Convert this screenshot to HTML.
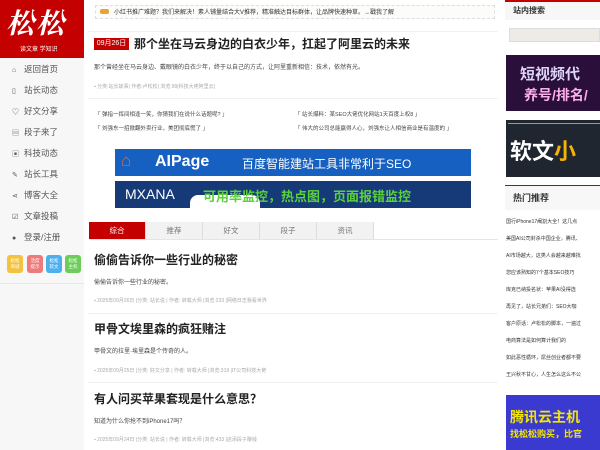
<!DOCTYPE html>
<html><head><meta charset="utf-8"><style>
*{margin:0;padding:0;box-sizing:border-box}
body{width:600px;height:450px;overflow:hidden;background:#fff;font-family:"Liberation Sans","Noto Sans CJK SC",sans-serif;color:#333;position:relative}
.a{position:absolute;white-space:nowrap}
#side{position:absolute;left:0;top:0;width:84px;height:450px;background:#f7f7f7}
#logo{position:absolute;left:0;top:0;width:84px;height:58px;background:#c40000;color:#fff}
.nav{position:absolute;left:12px;font-size:8.5px;color:#555}
.nav i{display:inline-block;width:8px;color:#555;font-style:normal;margin-right:4px;font-size:7px}
.cb{position:absolute;top:255px;width:16px;height:18px;border-radius:3px;color:#fff;font-size:4.5px;line-height:6px;text-align:center;padding-top:3px}
.q{font-size:5.5px;color:#444}
.tab{position:absolute;top:222px;height:17px;width:57px;background:#f2f2f2;border-right:1px solid #ddd;font-size:7.5px;color:#777;text-align:center;line-height:17px}
.t{font-size:12px;font-weight:bold;color:#222}
.d{font-size:6px;color:#444}
.m{font-size:5px;color:#aaa}
.li{position:absolute;left:506px;font-size:5px;color:#333;white-space:nowrap}
</style></head><body>
<div id="side">
<div id="logo"><div class="a" style="left:6px;top:2px;font-size:28px;font-family:'Noto Serif CJK SC',serif;font-weight:bold;letter-spacing:2px;font-style:italic">松松</div>
<div class="a" style="left:20px;top:44px;font-size:6px">读文章 学知识</div></div>
<div class="nav" style="top:63px"><i>⌂</i>返回首页</div>
<div class="nav" style="top:84px"><i>▯</i>站长动态</div>
<div class="nav" style="top:105px"><i>♡</i>好文分享</div>
<div class="nav" style="top:126px"><i>▤</i>段子来了</div>
<div class="nav" style="top:147px"><i>▣</i>科技动态</div>
<div class="nav" style="top:168px"><i>✎</i>站长工具</div>
<div class="nav" style="top:189px"><i>⋖</i>博客大全</div>
<div class="nav" style="top:210px"><i>☑</i>文章投稿</div>
<div class="nav" style="top:231px"><i>●</i>登录/注册</div>
<div class="cb" style="left:7px;background:#f3c240">松松<br>商城</div>
<div class="cb" style="left:27px;background:#ee7b7b">活度<br>提示</div>
<div class="cb" style="left:46px;background:#4db0ee">松松<br>软文</div>
<div class="cb" style="left:65px;background:#6ccd5a">松松<br>主机</div>
<div style="position:absolute;left:0;top:283px;width:84px;height:1px;background:#e8e8e8"></div>
</div>

<div class="a" style="left:95px;top:5px;width:400px;height:14px;border:1px dashed #ddd;background:#fcfcfa"></div>
<div class="a" style="left:100px;top:9px;width:9px;height:5px;background:#e8a23a;border-radius:2px"></div>
<div class="a" style="left:114px;top:7px;font-size:6px;color:#333">小红书推广难题？我们来解决！素人铺量结合大V推荐，精准触达目标群体，让品牌快速种草。→戳我了解</div>
<div class="a" style="left:88px;top:31px;width:410px;height:1px;background:#f0f0f0"></div>
<div class="a" style="left:94px;top:38px;width:35px;height:12px;background:#c40000;color:#fff;font-size:7px;text-align:center;line-height:12px">09月26日</div>
<div class="a" style="left:134px;top:35px;font-size:12px;font-weight:bold;color:#222">那个坐在马云身边的白衣少年，扛起了阿里云的未来</div>
<div class="a d" style="left:94px;top:62px">那个曾经坐在马云身边、戴眼镜的白衣少年，终于以自己的方式，让阿里重新相信：技术，依然有光。</div>
<div class="a m" style="left:94px;top:83px">▪ 分类:站长故事| 作者:卢松松| 浏览:99|科技大佬阿里云|</div>
<div class="a" style="left:88px;top:98px;width:410px;height:1px;background:#f0f0f0"></div>
<div class="a q" style="left:95px;top:110px">「 弹指一挥间相逢一笑，你猜我们在说什么话题呢? 」</div>
<div class="a q" style="left:95px;top:124px">「 刘强东一招掀翻外卖行业，美团彻底慌了 」</div>
<div class="a q" style="left:295px;top:110px">「 站长爆料：某SEO大佬优化网站1天百度上权8 」</div>
<div class="a q" style="left:295px;top:124px">「 伟大的公司总能赢得人心，刘强东让人相信商业是有温度的 」</div>
<div class="a" style="left:115px;top:149px;width:356px;height:27px;background:#1560c0;color:#fff"><span class="a" style="left:6px;top:2px;font-size:17px;color:#e46a2a">⌂</span><span class="a" style="left:40px;top:4px;font-size:16px;font-weight:bold">AIPage</span><span class="a" style="left:127px;top:6px;font-size:12px">百度智能建站工具非常利于SEO</span></div>
<div class="a" style="left:115px;top:181px;width:356px;height:27px;background:#163a78;color:#fff"><span class="a" style="left:10px;top:5px;font-size:14px">MXANA</span><div class="a" style="left:75px;top:14px;width:70px;height:14px;background:#fff;border-radius:8px 8px 0 0"></div><span class="a" style="left:88px;top:5px;font-size:13px;font-weight:bold;color:#5cd23a">可用率监控，热点图，页面报错监控</span></div>
<div class="a" style="left:89px;top:239px;width:409px;height:1px;background:#e5e5e5"></div>
<div class="tab" style="left:89px;background:#c40000;color:#fff">综合</div>
<div class="tab" style="left:146px">推荐</div>
<div class="tab" style="left:203px">好文</div>
<div class="tab" style="left:260px">段子</div>
<div class="tab" style="left:317px">资讯</div>

<div class="a t" style="left:94px;top:251px">偷偷告诉你一些行业的秘密</div>
<div class="a d" style="left:94px;top:277px">偷偷告诉你一些行业的秘密。</div>
<div class="a m" style="left:94px;top:297px">▪ 2025年09月26日 |分类: 站长说 | 作者: 转载大师 |浏览:233 |网络日志我看世界</div>
<div class="a" style="left:88px;top:313px;width:410px;height:1px;background:#f0f0f0"></div>
<div class="a t" style="left:94px;top:320px">甲骨文埃里森的疯狂赌注</div>
<div class="a d" style="left:94px;top:346px">甲骨文的拉里·埃里森是个传奇的人。</div>
<div class="a m" style="left:94px;top:367px">▪ 2025年09月25日 |分类: 好文分享 | 作者: 转载大师 |浏览:319 |IT公司科技大佬</div>
<div class="a" style="left:88px;top:382px;width:410px;height:1px;background:#f0f0f0"></div>
<div class="a t" style="left:94px;top:390px">有人问买苹果套现是什么意思？</div>
<div class="a d" style="left:94px;top:416px">知道为什么你抢不到iPhone17吗？</div>
<div class="a m" style="left:94px;top:436px">▪ 2025年09月24日 |分类: 站长说 | 作者: 转载大师 |浏览:433 |店添段子赚钱</div>

<div class="a" style="left:505px;top:0;width:95px;height:2px;background:#c40000"></div>
<div class="a" style="left:505px;top:2px;width:95px;height:18px;background:#f7f7f7"></div>
<div class="a" style="left:513px;top:5px;font-size:8px;font-weight:bold;color:#333">站内搜索</div>
<div class="a" style="left:509px;top:28px;width:91px;height:14px;background:#eeeae6;border:1px solid #ddd"></div>
<div class="a" style="left:506px;top:55px;width:94px;height:56px;background:#2a0f3a"><span class="a" style="left:14px;top:8px;font-size:15px;font-weight:bold;color:#ddd6f8">短视频代</span><span class="a" style="left:18px;top:30px;font-size:14px;font-weight:bold;color:#ffb0ec">养号/排名/</span></div>
<div class="a" style="left:506px;top:120px;width:94px;height:57px;background:#1f2630"><div class="a" style="left:2px;top:3px;width:92px;height:1px;background:#999"></div><span class="a" style="left:4px;top:14px;font-size:22px;font-weight:bold;color:#fff">软文<span style="color:#f5b400">小</span></span></div>
<div class="a" style="left:505px;top:185px;width:95px;height:1px;background:#c40000"></div>
<div class="a" style="left:505px;top:186px;width:95px;height:24px;background:#f7f7f7"></div>
<div class="a" style="left:513px;top:191px;font-size:9px;font-weight:bold;color:#333">热门推荐</div>
<div class="li" style="top:218px">国行iPhone17阉割大全！这几点</div>
<div class="li" style="top:235px">美国AI公司封杀中国企业，腾讯、</div>
<div class="li" style="top:252px">AI市场越大，这类人会越来越难找</div>
<div class="li" style="top:269px">您应该熟知的7个基本SEO技巧</div>
<div class="li" style="top:286px">库克已纳投名状：苹果AI没得选</div>
<div class="li" style="top:303px">再见了，站长兄弟们：SEO大咖</div>
<div class="li" style="top:320px">客户原话：卢松松的脚本，一遍过</div>
<div class="li" style="top:337px">电商算法是如何算计我们的</div>
<div class="li" style="top:354px">如此恶性循环，屌丝创业者都不要</div>
<div class="li" style="top:371px">王兴秋不甘心，人生怎么这么不公</div>
<div class="a" style="left:506px;top:395px;width:94px;height:55px;background:#3a3ad0"><span class="a" style="left:4px;top:12px;font-size:14px;font-weight:bold;color:#f5e600">腾讯云主机</span><span class="a" style="left:4px;top:32px;font-size:9px;font-weight:bold;color:#f5e600">找松松购买，比官</span></div>
</body></html>
